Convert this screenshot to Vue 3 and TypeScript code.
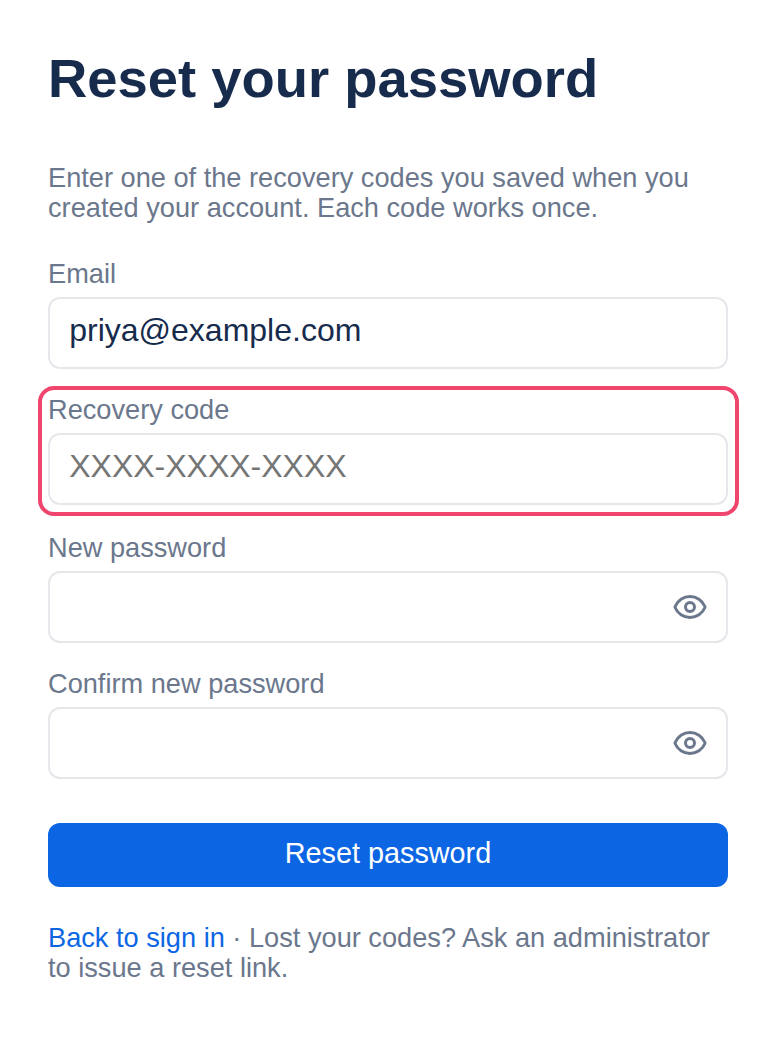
<script setup lang="ts">
const eye = true
</script>

<template>
  <main class="page">
    <h1 class="title">Reset your password</h1>
    <p class="intro">Enter one of the recovery codes you saved when you created your account. Each code works once.</p>
    <form class="form" @submit.prevent>
      <div class="field">
        <label class="label" for="email">Email</label>
        <input id="email" class="input" type="text" value="priya@example.com" />
      </div>
      <div class="field highlighted">
        <label class="label" for="code">Recovery code</label>
        <input id="code" class="input" type="text" placeholder="XXXX-XXXX-XXXX" />
      </div>
      <div class="field">
        <label class="label" for="pw">New password</label>
        <div class="wrap">
          <input id="pw" class="input" type="password" />
          <svg v-if="eye" class="eye" viewBox="0 0 24 24" fill="none" stroke="currentColor" stroke-width="2" stroke-linecap="round" stroke-linejoin="round">
            <path d="M2.062 12.348a1 1 0 0 1 0-.696 10.75 10.75 0 0 1 19.876 0 1 1 0 0 1 0 .696 10.75 10.75 0 0 1-19.876 0" />
            <circle cx="12" cy="12" r="3" />
          </svg>
        </div>
      </div>
      <div class="field">
        <label class="label" for="pw2">Confirm new password</label>
        <div class="wrap">
          <input id="pw2" class="input" type="password" />
          <svg v-if="eye" class="eye" viewBox="0 0 24 24" fill="none" stroke="currentColor" stroke-width="2" stroke-linecap="round" stroke-linejoin="round">
            <path d="M2.062 12.348a1 1 0 0 1 0-.696 10.75 10.75 0 0 1 19.876 0 1 1 0 0 1 0 .696 10.75 10.75 0 0 1-19.876 0" />
            <circle cx="12" cy="12" r="3" />
          </svg>
        </div>
      </div>
      <button class="submit" type="submit">Reset password</button>
    </form>
    <p class="foot"><a class="link" href="#">Back to sign in</a> · Lost your codes? Ask an administrator to issue a reset link.</p>
  </main>
</template>

<style scoped>
.page {
  padding: 49px 48px 0;
  font-family: "Liberation Sans", Arial, sans-serif;
  color: #6b778c;
  box-sizing: border-box;
}
.title {
  margin: 0;
  font-size: 54.4px;
  line-height: 60px;
  font-weight: 700;
  color: #172b4d;
}
.intro {
  margin: 54px 0 0;
  font-size: 27.2px;
  line-height: 30px;
}
.form {
  margin-top: 36px;
  display: flex;
  flex-direction: column;
}
.field {
  display: flex;
  flex-direction: column;
  gap: 8px;
  margin-bottom: 26px;
  position: relative;
}
.field.highlighted {
  margin-bottom: 28px;
}
.highlighted::after {
  content: "";
  position: absolute;
  inset: -9.5px -10.5px -10.5px -10.5px;
  border: 4.5px solid #f0466e;
  border-radius: 16px;
  pointer-events: none;
}
.label {
  font-size: 27.2px;
  line-height: 30px;
  color: #6b778c;
}
.wrap {
  position: relative;
}
.input {
  display: block;
  width: 100%;
  height: 72px;
  box-sizing: border-box;
  border: 2px solid #e5e7eb;
  border-radius: 12px;
  padding: 0 19.2px 6px;
  font: inherit;
  font-size: 32px;
  color: #172b4d;
  background: #fff;
  outline: none;
}
.input::placeholder {
  color: #757575;
}
.eye {
  position: absolute;
  right: 20px;
  top: 18px;
  width: 36px;
  height: 36px;
  color: #6b778c;
}
.submit {
  margin-top: 18px;
  height: 64px;
  border: 0;
  border-radius: 12px;
  padding: 0 0 4px;
  background: #0c66e4;
  color: #fff;
  font: inherit;
  font-size: 28.8px;
}
.foot {
  margin: 36px 0 0;
  font-size: 27.2px;
  line-height: 30px;
  color: #6b778c;
}
.link {
  color: #0c66e4;
  text-decoration: none;
}
</style>
